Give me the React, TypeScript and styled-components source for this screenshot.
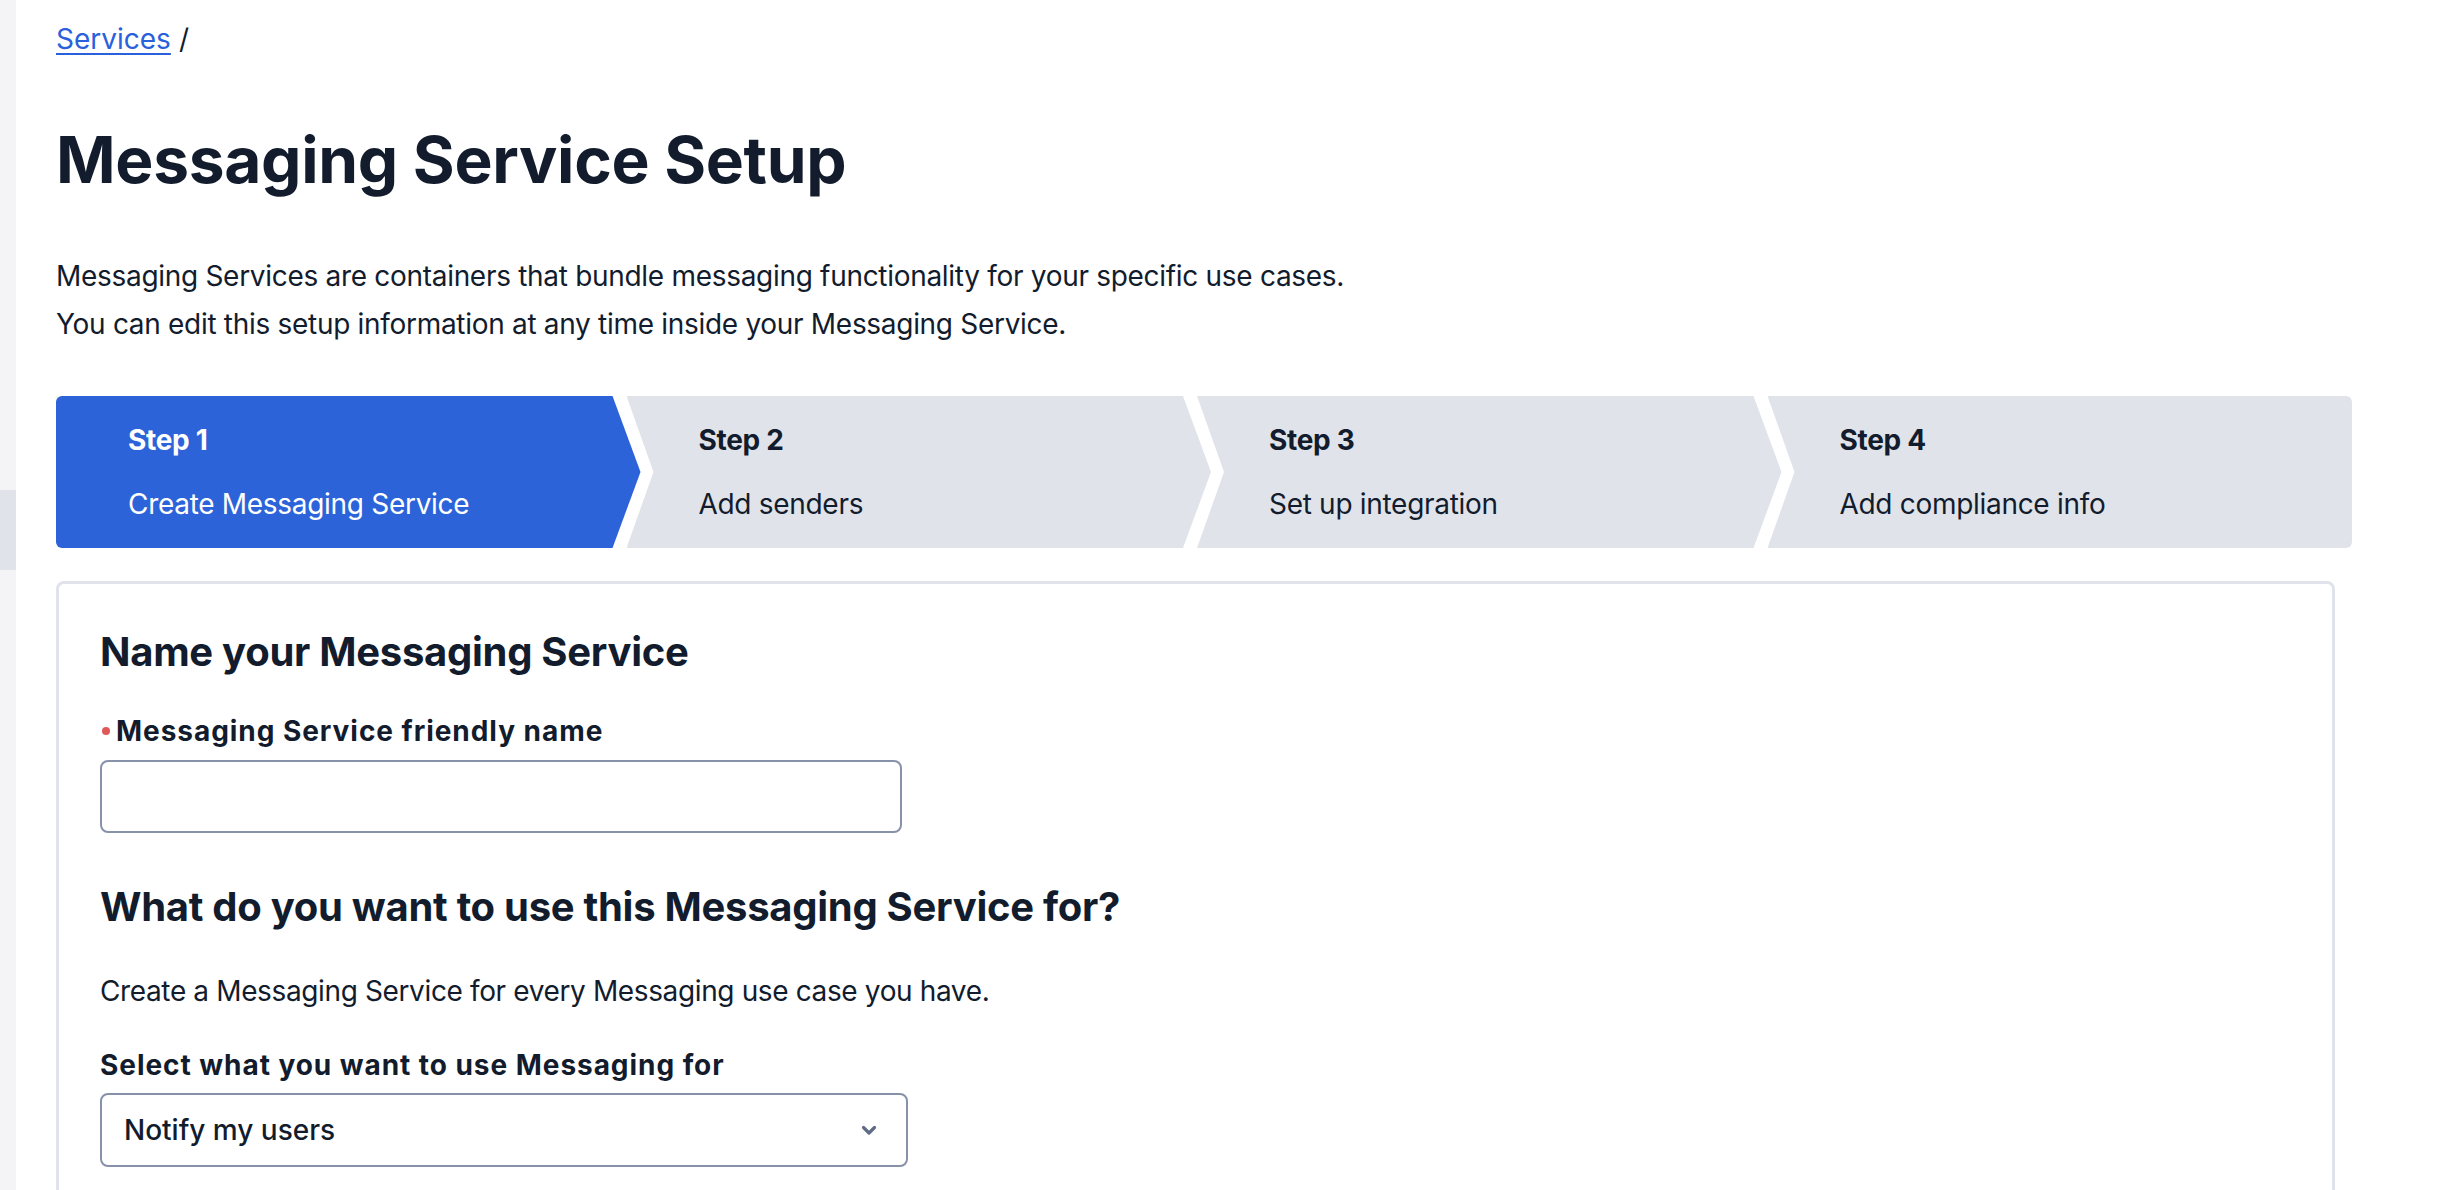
import React from "react";
import styled, { createGlobalStyle } from "styled-components";

const Global = createGlobalStyle`
  html, body { margin: 0; padding: 0; background: #ffffff; }
  body {
    font-family: Inter, "Noto Sans", "Liberation Sans", sans-serif;
    color: #121c2d;
    letter-spacing: -0.3px;
    overflow: hidden;
  }
  * { box-sizing: border-box; }
`;

const Shell = styled.div`
  display: flex;
  height: 100vh;
  overflow: hidden;
`;

const SideRail = styled.aside`
  width: 16px;
  flex: 0 0 16px;
  background: #f4f4f6;
  padding-top: 490px;
`;

const RailItem = styled.div`
  height: 80px;
  background: #e1e3ea;
`;

const Main = styled.main`
  flex: 1;
  padding: 19px 104px 0 40px;
  display: flex;
  flex-direction: column;
`;

const Breadcrumb = styled.nav`
  font-size: 28px;
  line-height: 40px;
  display: flex;
  gap: 8px;
  letter-spacing: 0;
`;

const CrumbLink = styled.a`
  color: #2a60dc;
  text-decoration: underline;
  text-underline-offset: 4px;
  text-decoration-thickness: 2px;
`;

const Title = styled.h1`
  margin: 61px 0 0;
  font-size: 64px;
  line-height: 80px;
  font-weight: 700;
  letter-spacing: -0.3px;
`;

const Description = styled.p`
  margin: 52px 0 0;
  font-size: 28px;
  line-height: 48px;
`;

const Steps = styled.ol`
  list-style: none;
  margin: 48px 0 0;
  padding: 0;
  display: flex;
  height: 152px;
`;

const Step = styled.li<{ $active?: boolean; $first?: boolean; $last?: boolean }>`
  flex: 1 1 0;
  min-width: 0;
  margin-left: ${(p) => (p.$first ? "0" : "-14px")};
  background: ${(p) => (p.$active ? "#2c63d9" : "#e1e3ea")};
  color: ${(p) => (p.$active ? "#ffffff" : "#121c2d")};
  border-radius: ${(p) => (p.$first ? "6px 0 0 6px" : p.$last ? "0 6px 6px 0" : "0")};
  clip-path: ${(p) =>
    p.$last
      ? "polygon(0 0, 100% 0, 100% 100%, 0 100%, 27px 50%)"
      : p.$first
      ? "polygon(0 0, calc(100% - 28px) 0, 100% 50%, calc(100% - 28px) 100%, 0 100%)"
      : "polygon(0 0, calc(100% - 28px) 0, 100% 50%, calc(100% - 28px) 100%, 0 100%, 27px 50%)"};
  padding: 24px 0 24px 72px;
  display: flex;
  flex-direction: column;
  gap: 24px;
  font-size: 28px;
  line-height: 40px;
`;

const StepNumber = styled.span`
  font-weight: 700;
`;

const StepLabel = styled.span`
  font-weight: 400;
`;

const Card = styled.section`
  margin: 33px 17px 0 0;
  border: 3px solid #e1e3ea;
  border-radius: 8px;
  padding: 40px 41px 200px;
  display: flex;
  flex-direction: column;
`;

const SectionHeading = styled.h2<{ $top?: number }>`
  margin: ${(p) => p.$top ?? 0}px 0 0;
  font-size: 40px;
  line-height: 56px;
  font-weight: 700;
  letter-spacing: -0.28px;
`;

const Label = styled.label<{ $top?: number }>`
  margin-top: ${(p) => p.$top ?? 0}px;
  display: flex;
  align-items: center;
  gap: 6px;
  font-size: 28px;
  line-height: 40px;
  font-weight: 700;
  letter-spacing: 0.95px;
`;

const RequiredDot = styled.span`
  width: 8px;
  height: 8px;
  border-radius: 50%;
  background: #e15858;
  margin-left: 2px;
`;

const TextInput = styled.input`
  margin-top: 9px;
  width: 802px;
  height: 73px;
  border: 2px solid #8891aa;
  border-radius: 8px;
  font: inherit;
  font-size: 28px;
  padding: 0 24px;
  outline: none;
`;

const HelpText = styled.p`
  margin: 36px 0 0;
  font-size: 28px;
  line-height: 40px;
  letter-spacing: -0.37px;
`;

const SelectBox = styled.div`
  margin-top: 8px;
  width: 808px;
  height: 74px;
  border: 2px solid #8891aa;
  border-radius: 8px;
  display: flex;
  align-items: center;
  justify-content: space-between;
  padding: 0 29px 0 22px;
  font-size: 28px;
  font-weight: 500;
  letter-spacing: 0;
`;

const Chevron = styled.svg`
  width: 16px;
  height: 12px;
`;

const steps = [
  { n: "Step 1", label: "Create Messaging Service" },
  { n: "Step 2", label: "Add senders" },
  { n: "Step 3", label: "Set up integration" },
  { n: "Step 4", label: "Add compliance info" },
];

export default function App() {
  return (
    <>
      <Global />
      <Shell>
        <SideRail>
          <RailItem />
        </SideRail>
        <Main>
          <Breadcrumb>
            <CrumbLink href="#">Services</CrumbLink>
            <span>/</span>
          </Breadcrumb>
          <Title>Messaging Service Setup</Title>
          <Description>
            Messaging Services are containers that bundle messaging functionality for your specific use cases.
            <br />
            You can edit this setup information at any time inside your Messaging Service.
          </Description>
          <Steps>
            {steps.map((s, i) => (
              <Step key={s.n} $active={i === 0} $first={i === 0} $last={i === steps.length - 1}>
                <StepNumber>{s.n}</StepNumber>
                <StepLabel>{s.label}</StepLabel>
              </Step>
            ))}
          </Steps>
          <Card>
            <SectionHeading>Name your Messaging Service</SectionHeading>
            <Label $top={31}>
              <RequiredDot />
              Messaging Service friendly name
            </Label>
            <TextInput aria-label="Messaging Service friendly name" />
            <SectionHeading $top={46}>What do you want to use this Messaging Service for?</SectionHeading>
            <HelpText>Create a Messaging Service for every Messaging use case you have.</HelpText>
            <Label $top={34}>Select what you want to use Messaging for</Label>
            <SelectBox>
              <span>Notify my users</span>
              <Chevron viewBox="0 0 16 12" fill="none">
                <path d="M2.5 3.5 L8 9 L13.5 3.5" stroke="#606b85" strokeWidth="3.2" strokeLinecap="round" strokeLinejoin="round" />
              </Chevron>
            </SelectBox>
          </Card>
        </Main>
      </Shell>
    </>
  );
}
